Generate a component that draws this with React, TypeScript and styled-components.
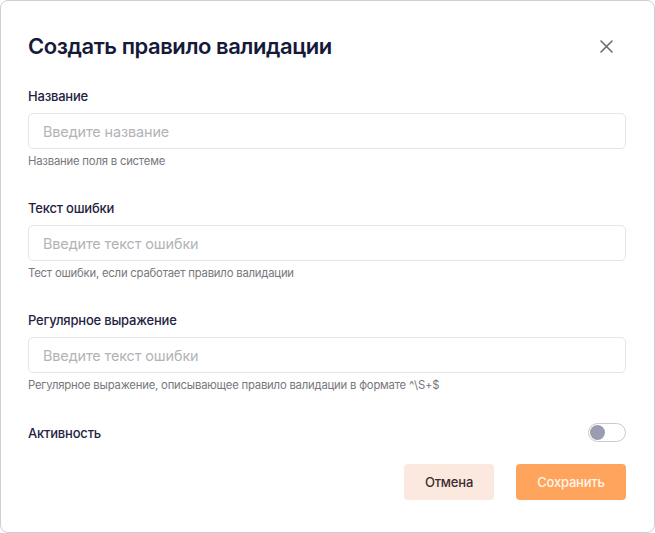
import React from "react";
import styled, { createGlobalStyle } from "styled-components";

const Global = createGlobalStyle`
  html, body { margin: 0; padding: 0; background: #ffffff; }
  * { box-sizing: border-box; }
  body { font-family: Inter, "Noto Sans", sans-serif; }
`;

const Card = styled.div`
  width: 655px;
  height: 533px;
  border: 1px solid #cfcfcf;
  border-radius: 8px;
  background: #fff;
  padding: 29px 27px 0 27px;
  display: flex;
  flex-direction: column;
`;

const Header = styled.div`
  display: flex;
  align-items: center;
  justify-content: space-between;
  height: 32px;
`;

const Title = styled.h1`
  margin: 0;
  font-family: Inter, sans-serif;
  font-size: 22px;
  font-weight: 600;
  letter-spacing: -0.45px;
  color: #161a3a;
`;

const Close = styled.button`
  border: 0;
  background: none;
  padding: 0;
  width: 20px;
  height: 20px;
  display: flex;
  align-items: center;
  justify-content: center;
  margin-right: 11px;
  cursor: pointer;
`;

const Form = styled.div`
  display: flex;
  flex-direction: column;
  margin-top: 26px;
`;

const Field = styled.div`
  display: flex;
  flex-direction: column;
  margin-bottom: 32px;
`;

const Label = styled.label`
  font-size: 13px;
  font-weight: 500;
  color: #1f2340;
  letter-spacing: -0.2px;
  line-height: 16px;
  margin-bottom: 9px;
`;

const Input = styled.input`
  width: 598px;
  height: 36px;
  border: 1px solid #e6e6e8;
  border-radius: 5px;
  padding: 0 14px;
  font-family: Inter, sans-serif;
  font-size: 14.4px;
  color: #222;
  outline: none;
  &::placeholder { color: #b3b3b8; letter-spacing: -0.1px; }
`;

const Hint = styled.div`
  margin-top: 5px;
  font-size: 11.3px;
  color: #77777d;
  letter-spacing: -0.2px;
  line-height: 14px;
`;

const ActiveRow = styled.div`
  display: flex;
  align-items: center;
  justify-content: space-between;
  width: 598px;
  margin-top: -1px;
`;

const Track = styled.div`
  width: 38px;
  height: 19px;
  border: 1px solid #c9c9cf;
  border-radius: 10px;
  padding: 1px;
  display: flex;
  align-items: center;
`;

const Knob = styled.div`
  width: 15px;
  height: 15px;
  border-radius: 50%;
  background: #9c9cb0;
`;

const Footer = styled.div`
  display: flex;
  justify-content: flex-end;
  gap: 22px;
  width: 598px;
  margin-top: 22px;
`;

const Button = styled.button<{ $primary?: boolean }>`
  height: 36px;
  border: 0;
  border-radius: 4px;
  font-family: Inter, sans-serif;
  font-size: 13px;
  font-weight: 500;
  letter-spacing: -0.2px;
  padding: 0;
  width: ${(p) => (p.$primary ? "110px" : "90px")};
  background: ${(p) => (p.$primary ? "#ffa45c" : "#fbe9df")};
  color: ${(p) => (p.$primary ? "#fff4ea" : "#3a2e2e")};
`;

const fields = [
  { label: "Название", ph: "Введите название", hint: "Название поля в системе" },
  { label: "Текст ошибки", ph: "Введите текст ошибки", hint: "Тест ошибки, если сработает правило валидации" },
  {
    label: "Регулярное выражение",
    ph: "Введите текст ошибки",
    hint: "Регулярное выражение, описывающее правило валидации в формате ^\\S+$",
  },
];

export default function App() {
  return (
    <>
      <Global />
      <Card>
        <Header>
          <Title>Создать правило валидации</Title>
          <Close aria-label="close">
            <svg width="13" height="13" viewBox="0 0 13 13">
              <path d="M1 1 L12 12 M12 1 L1 12" stroke="#6b6b70" strokeWidth="1.6" strokeLinecap="round" />
            </svg>
          </Close>
        </Header>
        <Form>
          {fields.map((f) => (
            <Field key={f.label}>
              <Label>{f.label}</Label>
              <Input placeholder={f.ph} />
              <Hint>{f.hint}</Hint>
            </Field>
          ))}
          <ActiveRow>
            <Label as="span" style={{ marginBottom: 0 }}>Активность</Label>
            <Track>
              <Knob />
            </Track>
          </ActiveRow>
          <Footer>
            <Button>Отмена</Button>
            <Button $primary>Сохранить</Button>
          </Footer>
        </Form>
      </Card>
    </>
  );
}
